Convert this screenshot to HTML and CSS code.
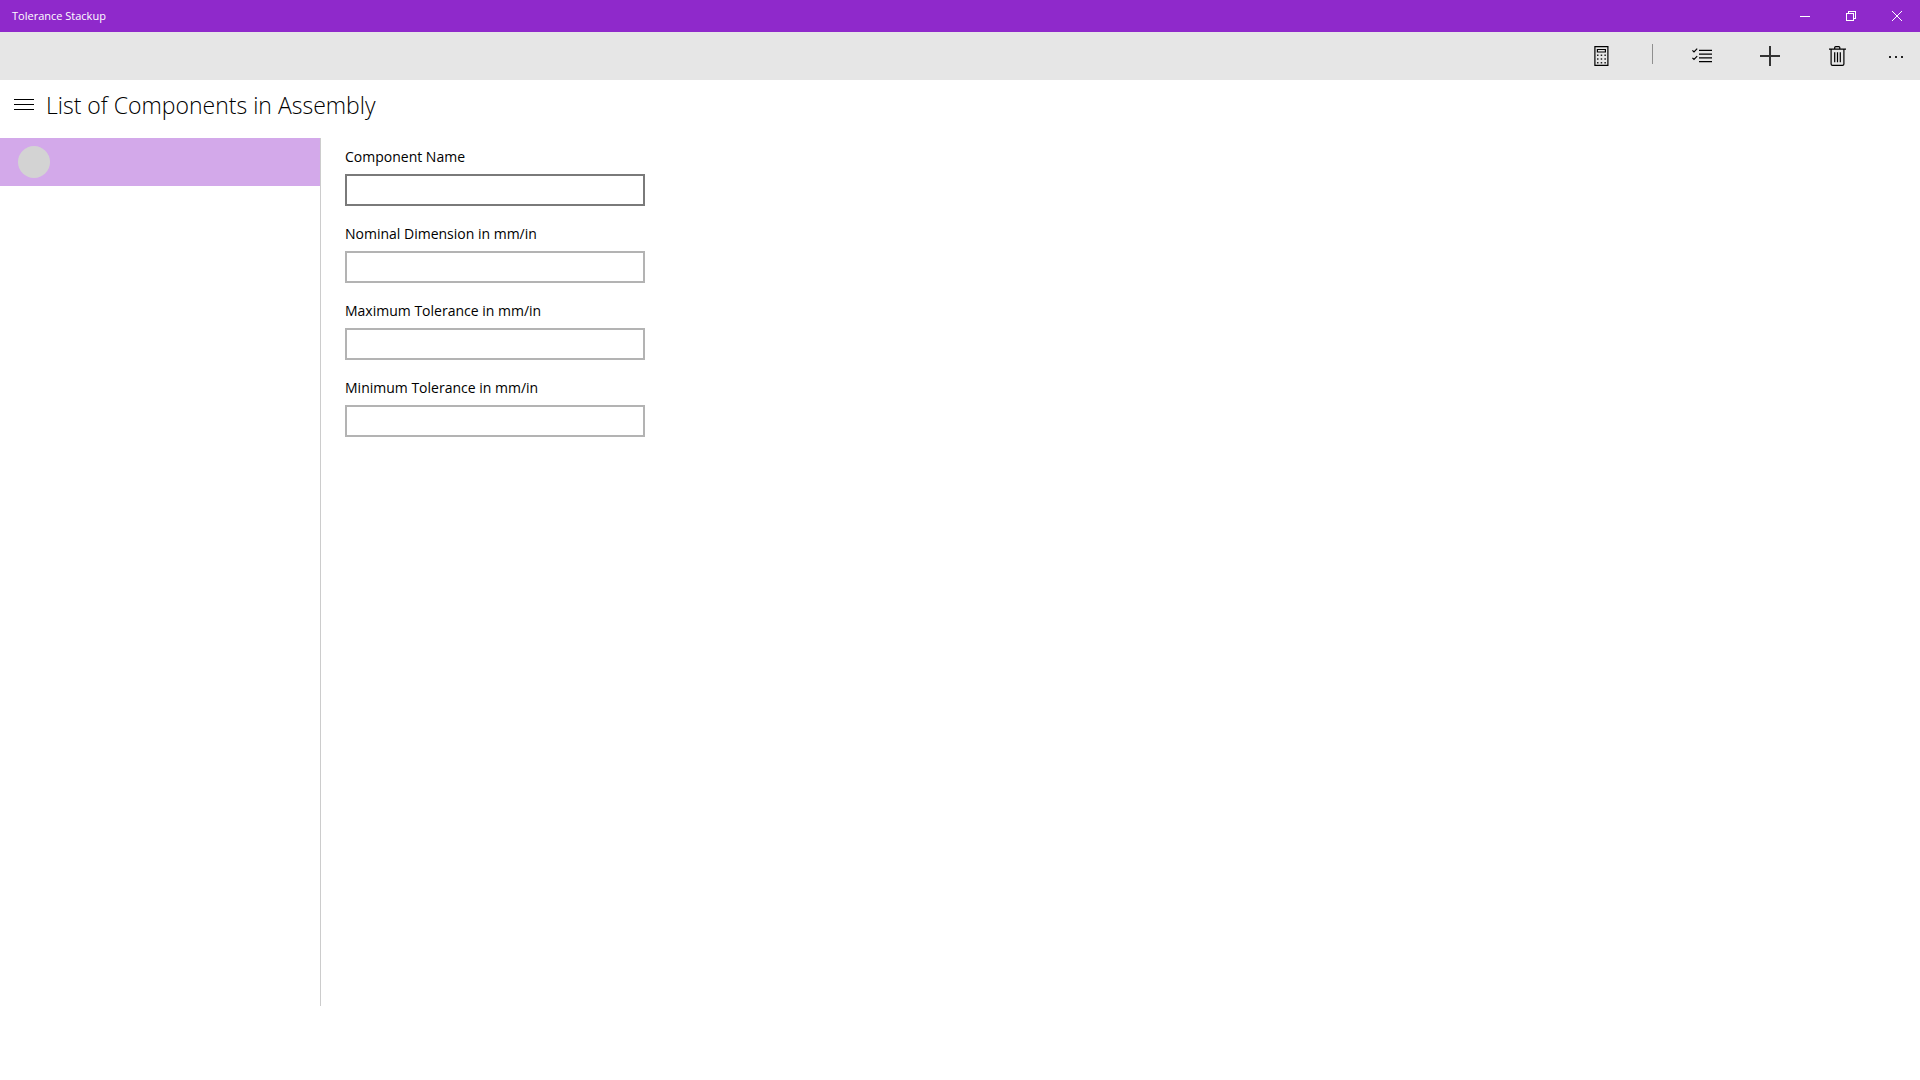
FILE: index.html
```html
<!DOCTYPE html>
<html lang="en">
<head>
<meta charset="utf-8">
<meta name="viewport" content="width=device-width, initial-scale=1">
<title>Tolerance Stackup</title>
<link rel="stylesheet" href="styles.css">
</head>
<body>
<div class="window">
  <header class="title-bar">
    <span class="app-name">Tolerance Stackup</span>
    <div class="window-controls">
      <button class="window-button" type="button" aria-label="Minimize">
        <svg width="10" height="10" viewBox="0 0 10 10" shape-rendering="crispEdges"><path d="M0 5.5H10"/></svg>
      </button>
      <button class="window-button" type="button" aria-label="Restore">
        <svg width="10" height="10" viewBox="0 0 10 10" shape-rendering="crispEdges"><path d="M.5 2.5H7.5V9.5H.5ZM2.5 2.5V.5H9.5V7.5H7.5"/></svg>
      </button>
      <button class="window-button" type="button" aria-label="Close">
        <svg width="10" height="10" viewBox="0 0 10 10"><path d="M0 0L10 10M10 0L0 10"/></svg>
      </button>
    </div>
  </header>

  <div class="command-bar" role="toolbar" aria-label="Commands">
    <button class="command" type="button" aria-label="Calculate">
      <svg width="20" height="20" viewBox="0 0 20 20">
        <path class="stroke" d="M3.9.6H16.9V19.4H3.9ZM6.400 3.5H14.400V6H6.400Z"/>
        <path class="fill" d="M6 8.500h1.500v1.500h-1.500zM9.700 8.500h1.500v1.500h-1.500zM13.400 8.500h1.500v1.500h-1.500zM6 12.300h1.500v1.500h-1.500zM9.700 12.300h1.500v1.500h-1.500zM13.400 12.300h1.500v1.500h-1.500zM6 16h1.500v1.500h-1.500zM9.700 16h1.500v1.500h-1.500zM13.400 16h1.500v1.500h-1.500z"/>
      </svg>
    </button>
    <span class="separator" role="separator"></span>
    <button class="command" type="button" aria-label="Select">
      <svg width="20" height="20" viewBox="0 0 20 20">
        <path class="stroke" d="M7 4.400H20M7 8.100H20M7 11.900H20M7 15.600H20M.4 4.300L2 5.900L5.200 2.600M.4 11.800L2 13.400L5.200 10.100"/>
      </svg>
    </button>
    <button class="command" type="button" aria-label="Add">
      <svg width="20" height="20" viewBox="0 0 20 20"><path class="plus" d="M10 0V20M0 10H20"/></svg>
    </button>
    <button class="command" type="button" aria-label="Delete">
      <svg width="20" height="20" viewBox="0 0 20 20">
        <path class="stroke" d="M1 3.100H18M6.700 3V1.600Q6.700.6 7.700.6H10.800Q11.800.6 11.800 1.600V3M3.100 3.500V18Q3.100 19.400 4.500 19.400H14.500Q15.900 19.400 15.900 18V3.500M6.700 6.200V16.200M9.500 6.200V16.200M12.300 6.200V16.200"/>
      </svg>
    </button>
    <button class="command command-more" type="button" aria-label="More">
      <svg width="20" height="20" viewBox="0 0 20 20"><path class="fill" d="M3 10h2v2H3zM9 10h2v2H9zM15 10h2v2H15z"/></svg>
    </button>
  </div>

  <div class="page-header">
    <button class="menu-button" type="button" aria-label="Menu">
      <svg width="20" height="12" viewBox="0 0 20 12" shape-rendering="crispEdges"><path class="bars" d="M0 1.500H20M0 6.500H20M0 11.500H20"/></svg>
    </button>
    <h1 class="page-title">List of Components in Assembly</h1>
  </div>

  <main class="content">
    <ul class="component-list" aria-label="Components">
      <li><button class="component" type="button" aria-label="Unnamed component"><span class="avatar"></span></button></li>
    </ul>
    <form class="details">
      <div class="field">
        <label class="label" for="name">Component Name</label>
        <input class="input input-active" id="name" type="text">
      </div>
      <div class="field">
        <label class="label" for="nominal">Nominal Dimension in mm/in</label>
        <input class="input" id="nominal" type="text">
      </div>
      <div class="field">
        <label class="label" for="maximum">Maximum Tolerance in mm/in</label>
        <input class="input" id="maximum" type="text">
      </div>
      <div class="field">
        <label class="label" for="minimum">Minimum Tolerance in mm/in</label>
        <input class="input" id="minimum" type="text">
      </div>
    </form>
  </main>
</div>
</body>
</html>
```
FILE: styles.css
```css
* {
  box-sizing: border-box;
}

body {
  margin: 0;
  background: #fff;
  color: #000;
  font-family: "Segoe UI", "Open Sans", "Noto Sans", sans-serif;
  font-size: 14px;
}

button {
  margin: 0;
  padding: 0;
  border: 0;
  background: transparent;
  color: inherit;
  font: inherit;
}

svg {
  display: block;
  fill: none;
}

.window {
  display: flex;
  flex-direction: column;
  min-height: 100vh;
  padding-bottom: 74px;
}

.title-bar {
  display: flex;
  justify-content: space-between;
  height: 32px;
  padding-left: 12px;
  background: #8f29cb;
  color: #fff;
}

.app-name {
  font-size: 11px;
  font-weight: 500;
  line-height: 32px;
}

.window-controls {
  display: flex;
}

.window-button {
  display: grid;
  place-items: center;
  width: 46px;
  height: 32px;
}

.window-button path {
  stroke: #fff;
}

.command-bar {
  display: flex;
  justify-content: flex-end;
  height: 48px;
  background: #e6e6e6;
}

.command {
  display: grid;
  place-items: center;
  width: 68px;
  height: 48px;
}

.command-more {
  width: 48px;
}

.separator {
  width: 1px;
  height: 20px;
  margin: 12px 15px 12px 17px;
  background: #8f8f8f;
}

.stroke {
  stroke: #000;
  stroke-width: 1.2;
}

.plus {
  stroke: #333;
  stroke-width: 2;
}

.fill {
  fill: #222;
}

.bars {
  stroke: #000;
}

.page-header {
  display: flex;
  height: 58px;
}

.menu-button {
  display: flex;
  align-items: center;
  width: 46px;
  height: 48px;
  padding-left: 14px;
}

.page-title {
  margin: 0;
  font-size: 23px;
  font-weight: 300;
  line-height: 50px;
}

.content {
  display: flex;
  flex: 1;
}

.component-list {
  flex: none;
  width: 321px;
  margin: 0;
  padding: 0;
  border-right: 1px solid #ccc;
  list-style: none;
}

.component {
  display: flex;
  align-items: center;
  width: 100%;
  height: 48px;
  padding-left: 18px;
  background: #d3a9ea;
}

.avatar {
  width: 32px;
  height: 32px;
  border-radius: 50%;
  background: #d3d3d3;
}

.details {
  display: flex;
  flex: 1;
  flex-direction: column;
  gap: 18px;
  padding: 9px 24px;
}

.field {
  display: flex;
  flex-direction: column;
  gap: 7px;
}

.label {
  font-size: 14px;
  line-height: 20px;
}

.input {
  width: 100%;
  max-width: 300px;
  height: 32px;
  padding: 4px 8px;
  border: 2px solid #b3b3b3;
  border-radius: 0;
  background: #fff;
  font: inherit;
}

.input-active {
  border-color: #7a7a7a;
}
```
